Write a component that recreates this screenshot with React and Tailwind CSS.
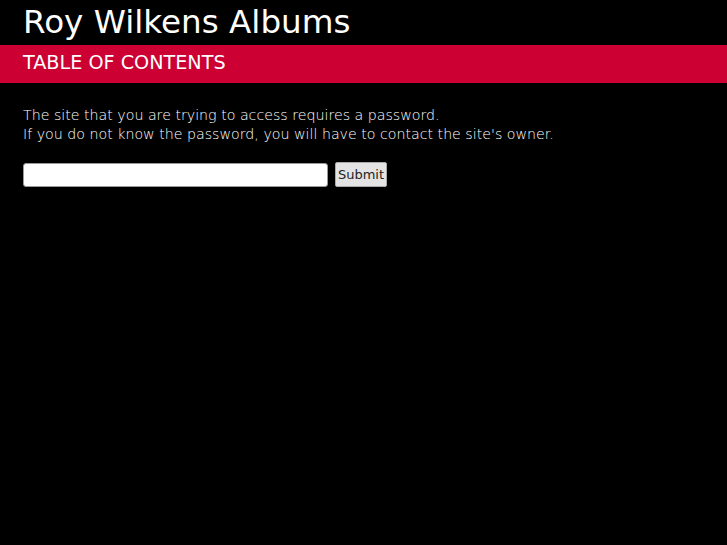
export default function App() {
    return (
        <div className="min-h-[545px] w-full bg-black" style={{ fontFamily: '"DejaVu Sans", sans-serif' }}>
            <div className="h-[45px] px-[23px] flex items-center">
                <h1 className="text-[32.6px] leading-none text-white">Roy Wilkens Albums</h1>
            </div>
            <div className="h-[38px] bg-[#cc0033] px-[23px] flex items-center">
                <h2 className="text-[19.2px] leading-none text-white -mt-[3px]">TABLE OF CONTENTS</h2>
            </div>
            <div className="px-[23px] pt-[23px]">
                <p className="text-[14.2px] leading-[19px] font-extralight text-white">
                    The site that you are trying to access requires a password.
                    <br />
                    If you do not know the password, you will have to contact the site's owner.
                </p>
                <form className="mt-[18px] flex items-center gap-[7px]" onSubmit={(e) => e.preventDefault()}>
                    <input
                        type="password"
                        className="h-[24px] w-[305px] rounded-[3px] border border-[#999] bg-white px-1"
                    />
                    <button
                        type="submit"
                        className="h-[25px] w-[52px] rounded-[2px] border border-[#aaa] bg-[#e4e4e4] text-[13px] text-[#222]"
                    >
                        Submit
                    </button>
                </form>
            </div>
        </div>
    );
}
